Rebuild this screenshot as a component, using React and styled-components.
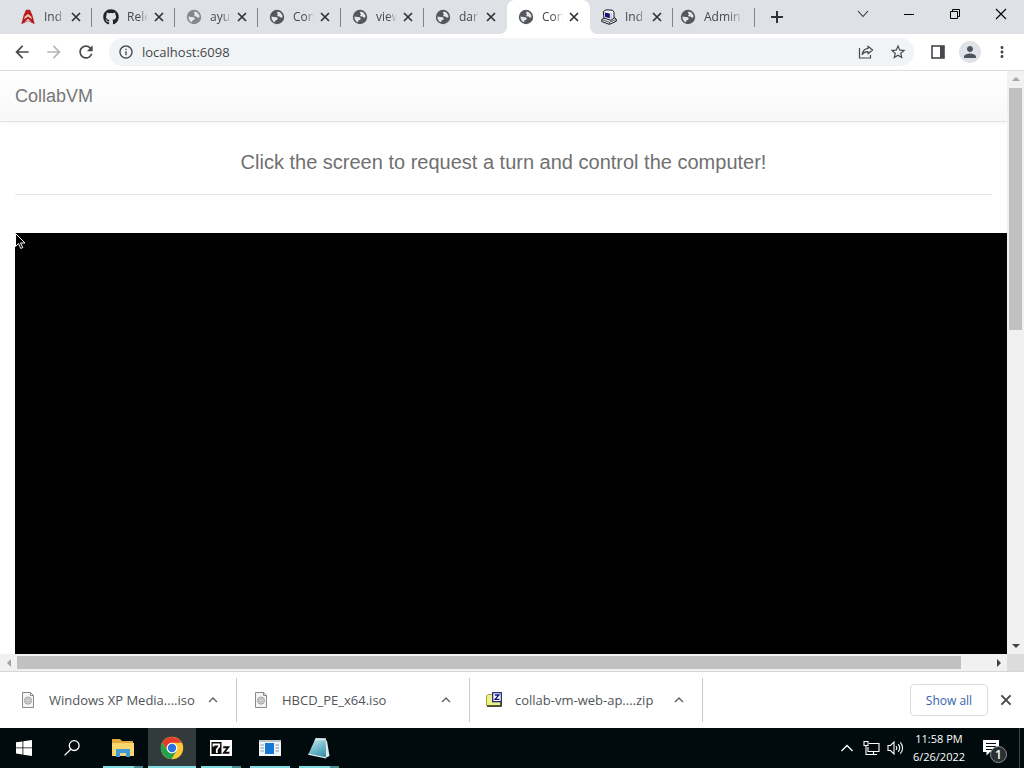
import React from "react";
import styled, { createGlobalStyle, css } from "styled-components";
import {
  MdArrowBack,
  MdArrowForward,
  MdRefresh,
  MdInfoOutline,
  MdStarBorder,
  MdMoreVert,
  MdPerson,
  MdKeyboardArrowUp,
} from "react-icons/md";
import { FaGithub } from "react-icons/fa";

const Global = createGlobalStyle`
  *, *::before, *::after { box-sizing: border-box; }
  body { margin: 0; font-family: "Open Sans", "Noto Sans", sans-serif; }
  button { border: 0; padding: 0; margin: 0; background: none; font: inherit; color: inherit; }
  svg { display: block; flex: none; }
`;

const Desktop = styled.div`
  display: flex;
  flex-direction: column;
  height: 100vh;
  overflow: hidden;
  background: #fff;
`;

/* ---------- tab strip ---------- */

const TabStrip = styled.header`
  display: flex;
  flex: none;
  height: 34px;
  padding-left: 9px;
  background: #dee1e6;
`;

const Tab = styled.div`
  position: relative;
  display: flex;
  align-items: center;
  flex: none;
  width: ${(p) => (p.$closable ? 83 : 82)}px;
  padding-left: ${(p) => (p.$closable ? 11 : 7)}px;
  color: #45494d;
  ${(p) =>
    p.$divided &&
    css`
      &::after {
        content: "";
        position: absolute;
        right: 0;
        top: 8px;
        width: 1px;
        height: 19px;
        background: #808387;
      }
    `}
  ${(p) =>
    p.$active &&
    css`
      background: #fff;
      border-radius: 8px 8px 0 0;
      &::before,
      &::after {
        content: "";
        position: absolute;
        bottom: 0;
        width: 8px;
        height: 8px;
      }
      &::before {
        right: 100%;
        background: radial-gradient(circle at 0 0, transparent 8px, #fff 8px);
      }
      &::after {
        left: 100%;
        background: radial-gradient(circle at 100% 0, transparent 8px, #fff 8px);
      }
    `}
`;

const TabTitle = styled.a`
  flex: none;
  width: ${(p) => (p.$wide ? 42 : 22)}px;
  margin-left: 8px;
  overflow: hidden;
  white-space: nowrap;
  font-size: 12px;
  line-height: 18px;
  color: inherit;
  text-decoration: none;
  mask-image: linear-gradient(to right, #000 55%, transparent 95%);
`;

const TabClose = styled.button`
  display: flex;
  margin-left: 3px;
  color: #303336;
`;

const NewTab = styled.button`
  display: flex;
  align-items: center;
  margin-left: 13px;
  color: #303336;
`;

const WindowButtons = styled.div`
  display: flex;
  margin-left: auto;
`;

const WindowButton = styled.button`
  display: flex;
  align-items: center;
  justify-content: center;
  width: 46px;
  height: 28px;
`;

/* ---------- toolbar ---------- */

const Toolbar = styled.nav`
  display: flex;
  align-items: center;
  flex: none;
  height: 37px;
  padding: 0 6px;
  border-bottom: 1px solid #dadce0;
  color: #45494d;
`;

const ToolButton = styled.button`
  display: flex;
  align-items: center;
  justify-content: center;
  width: 32px;
  height: 28px;
  color: ${(p) => (p.$dim ? "#b4b7ba" : "inherit")};
`;

const NavButtons = styled.div`
  display: flex;
  margin-right: 7px;
`;

const AddressBar = styled.form`
  display: flex;
  align-items: center;
  flex: 1;
  height: 28px;
  margin-right: 8px;
  padding-left: 9px;
  border-radius: 14px;
  background: #f1f3f4;
`;

const AddressInput = styled.input`
  flex: 1;
  min-width: 0;
  margin-left: 8px;
  padding: 0;
  border: 0;
  outline: 0;
  background: none;
  font-family: inherit;
  font-size: 13px;
  line-height: 20px;
  color: #45484b;
`;

const Avatar = styled.span`
  display: flex;
  align-items: center;
  justify-content: center;
  width: 22px;
  height: 22px;
  border-radius: 50%;
  background: #dfe2e7;
  color: #4a545f;
`;

/* ---------- page viewport ---------- */

const Viewport = styled.div`
  display: grid;
  flex: 1;
  min-height: 0;
  grid-template: minmax(0, 1fr) 17px / minmax(0, 1fr) 17px;
`;

const Page = styled.main`
  display: flex;
  flex-direction: column;
  overflow: hidden;
  background: #fff;
  font-family: "Liberation Sans", Arial, sans-serif;
  color: #777;
`;

const Navbar = styled.div`
  flex: none;
  padding: 15px;
  border-bottom: 1px solid #e3e3e3;
  background: linear-gradient(#fff, #f8f8f8);
  box-shadow: 0 1px 4px rgba(0, 0, 0, 0.05);
`;

const Brand = styled.a`
  display: block;
  font-size: 18px;
  line-height: 20px;
  color: #777;
  text-decoration: none;
`;

const Container = styled.div`
  display: flex;
  flex-direction: column;
  flex: 1;
  padding: 24px 0 0 15px;
`;

const Notice = styled.h1`
  margin: 0 15px 38px 0;
  padding: 4px 0 20px;
  border-bottom: 1px solid #e5e5e5;
  font-size: 20px;
  font-weight: 400;
  line-height: 24px;
  text-align: center;
  color: #707070;
`;

const Screen = styled.div`
  position: relative;
  flex: 1;
  background: #000;
`;

const Pointer = styled.svg`
  position: absolute;
  left: 0;
  top: 0;
`;

const Scrollbar = styled.div`
  display: flex;
  flex-direction: ${(p) => (p.$vertical ? "column" : "row")};
  background: #f1f1f1;
`;

const ScrollArrow = styled.button`
  display: flex;
  align-items: center;
  justify-content: center;
  flex: none;
  width: 17px;
  height: 17px;
  color: ${(p) => (p.$dim ? "#a3a3a3" : "#404040")};
`;

const ScrollTrack = styled.div`
  flex: 1;
  padding: ${(p) => (p.$vertical ? "0 2px" : "2px 0")};
`;

const VerticalThumb = styled.div`
  height: 44%;
  background: #c1c1c1;
`;

const HorizontalThumb = styled.div`
  width: 97%;
  height: 13px;
  background: #c1c1c1;
`;

const ScrollCorner = styled.div`
  background: #dcdcdc;
`;

/* ---------- downloads ---------- */

const DownloadShelf = styled.section`
  display: flex;
  align-items: center;
  flex: none;
  height: 57px;
  padding: 0 10px 0 4px;
  border-top: 1px solid #d4d6d9;
  background: #fff;
  color: #45494d;
`;

const Download = styled.div`
  display: flex;
  align-items: center;
  width: 233px;
  height: 44px;
  padding: 0 14px 0 16px;
  border-right: 1px solid #c8cacd;
`;

const DownloadName = styled.a`
  flex: 1;
  margin-left: 13px;
  font-size: 13px;
  line-height: 18px;
  white-space: nowrap;
  color: #505458;
  text-decoration: none;
`;

const DownloadMenu = styled.button`
  display: flex;
  color: #5f6368;
`;

const ShowAll = styled.button`
  width: 78px;
  height: 32px;
  margin-left: auto;
  border: 1px solid #dadce0;
  border-radius: 4px;
  font-size: 12px;
  font-weight: 500;
  color: #3562ae;
`;

const ShelfClose = styled.button`
  display: flex;
  margin-left: 10px;
  color: #45494d;
`;

/* ---------- taskbar ---------- */

const Taskbar = styled.footer`
  display: flex;
  flex: none;
  height: 40px;
  background: #010b0d;
  color: #fff;
`;

const TaskButton = styled.button`
  display: flex;
  align-items: center;
  justify-content: center;
  width: 48px;
  height: 40px;
`;

const RunningApps = styled.div`
  display: flex;
  gap: 1px;
  margin-left: 3px;
`;

const AppButton = styled(TaskButton)`
  position: relative;
  background: ${(p) => (p.$current ? "#323a3c" : "transparent")};
  &::after {
    content: "";
    position: absolute;
    bottom: 0;
    left: ${(p) => (p.$current ? 0 : 4)}px;
    right: ${(p) => (p.$current ? 0 : 4)}px;
    height: 2px;
    background: ${(p) =>
      p.$stacked ? "linear-gradient(to right, #7fdde2 31px, #4b8d91 31px)" : "#7fdde2"};
  }
`;

const Tray = styled.div`
  display: flex;
  align-items: center;
  margin-left: auto;
  padding-right: 4px;
`;

const TrayButton = styled.button`
  display: flex;
  align-items: center;
  justify-content: center;
  width: 24px;
  height: 40px;
`;

const Clock = styled.time`
  width: 64px;
  font-size: 11px;
  line-height: 18px;
  text-align: center;
  white-space: nowrap;
`;

const ActionCenter = styled.button`
  position: relative;
  display: flex;
  align-items: center;
  justify-content: center;
  width: 40px;
  height: 40px;
  margin-right: 8px;
`;

const Count = styled.span`
  position: absolute;
  right: 4px;
  bottom: 5px;
  width: 17px;
  height: 17px;
  border: 1px solid #8b9091;
  border-radius: 50%;
  background: #2a3032;
  font-size: 12px;
  font-weight: 600;
  line-height: 15px;
  text-align: center;
`;

const DesktopPeek = styled.span`
  width: 1px;
  height: 40px;
  background: #3b4547;
`;

/* ---------- drawings ---------- */

const Cross = ({ size = 14 }) => (
  <svg width={size} height={size} viewBox="0 0 14 14" stroke="currentColor" strokeWidth="1.7">
    <path d="m3 3 8 8M11 3l-8 8" />
  </svg>
);

const Plus = () => (
  <svg width="18" height="18" viewBox="0 0 18 18" stroke="currentColor" strokeWidth="2">
    <path d="M9 3v12M3 9h12" />
  </svg>
);

const Globe = ({ color = "#54585c" }) => (
  <svg width="16" height="16" viewBox="0 0 16 16">
    <circle cx="8" cy="8" r="7.2" fill={color} />
    <path d="M8.6 2.4 11 3.200 13.200 6l.4 2.200-1.800.6-1.200-1.200H9L8 6.400l1-1.200-1-.9Z" fill="#e4e6e9" />
    <path d="M2.400 7.600 5.200 8l2.600.2 1 1.400-.6 1.200-1.800.6-.4 1.900-1.600-.8-1.600-2.200Z" fill="#e4e6e9" />
  </svg>
);

const ApacheA = () => (
  <svg width="16" height="16" viewBox="0 0 16 16">
    <path d="M6 .8h4L12.300 6l2.400 9.200-3-1.400L8 12l-3.400 1.800-3.300 1.400L3.700 6Z" fill="#b51c22" />
    <path d="M4.800 7.600 8 5l3.200 2.600.7 2.600L8 7.400l-3.900 2.800Z" fill="#f6c9a4" />
    <path d="M4.400 13.400 8 9.800l3.600 3.600L8 11.600Z" fill="#e8e1e2" />
  </svg>
);

const MachineIcon = () => (
  <svg width="16" height="16" viewBox="0 0 16 16">
    <path d="M.8 10.600 4 8.500l9-.5 2.300 2.200v2L8.500 15.400.8 12.600Z" fill="#e3e5ea" stroke="#181a24" />
    <path d="M1 10.800 8.500 13.300l6.600-3M8.500 13.300v2" fill="none" stroke="#3c3f4c" strokeWidth=".8" />
    <path d="M2.300 2.600 5 .8l6.500.4L13 3.200v6L10 11.300 3 9.200Z" fill="#f4f5f7" stroke="#181a24" />
    <path d="M3.700 3.500 8.800 4.600v4.600L4.200 8Z" fill="#17157d" />
    <path d="M10.200 4.300v6.800" stroke="#9094a0" strokeWidth=".8" />
  </svg>
);

const ShareIcon = () => (
  <svg width="16" height="16" viewBox="0 0 16 16" fill="none" stroke="currentColor" strokeWidth="1.2">
    <path d="M1.500 4v10h11v-3" />
    <path d="M10 2.200 14.600 6 10 9.800V7.600C7.400 7.500 5.700 8.300 4.200 10.400 4.600 6.900 6.700 4.800 10 4.400Z" strokeLinejoin="round" />
  </svg>
);

const SidePanelIcon = () => (
  <svg width="14" height="14" viewBox="0 0 14 14">
    <rect x="1" y="1" width="12" height="12" fill="none" stroke="currentColor" strokeWidth="1.6" />
    <rect x="9" y="1" width="4" height="12" fill="currentColor" />
  </svg>
);

const arrowPaths = {
  up: "M0 5 4 1l4 4Z",
  down: "M0 2l4 4 4-4Z",
  left: "M6 0 2 4l4 4Z",
  right: "M2 0l4 4-4 4Z",
};

const Arrow = ({ dir }) => (
  <svg width="8" height="8" viewBox="0 0 8 8">
    <path d={arrowPaths[dir]} fill="currentColor" />
  </svg>
);

const DiscFile = () => (
  <svg width="16" height="16" viewBox="0 0 16 16">
    <path d="M2.500.5h8l3 3v12h-11Z" fill="#f5f5f5" stroke="#8a8a8a" />
    <path d="M10.500.5v3h3" fill="none" stroke="#8a8a8a" />
    <circle cx="8" cy="8.6" r="3.6" fill="#c9c9c9" stroke="#9c9c9c" strokeWidth=".8" />
    <circle cx="8" cy="8.6" r="1.1" fill="#f3f3f3" stroke="#9c9c9c" strokeWidth=".5" />
  </svg>
);

const ZipFile = () => (
  <svg width="16" height="16" viewBox="0 0 16 16">
    <path d="M.5 4 2 2.500h4L7 4h7.500v9.500H.5Z" fill="#eef08a" stroke="#a3a535" />
    <path d="M1 14.200h14.200V10" fill="none" stroke="#111" strokeWidth="1.2" />
    <rect x="6.7" y=".7" width="8.6" height="9" fill="#fff" stroke="#16167c" strokeWidth="1.2" />
    <path d="M8.800 3h4.200L9 7.400h4.400" fill="none" stroke="#16167c" strokeWidth="1.3" />
  </svg>
);

const WindowsLogo = () => (
  <svg width="16" height="16" viewBox="0 0 16 16" fill="#fff">
    <path d="M0 2.300 6.500 1.400v6.100H0ZM7.300 1.300 16 0v7.500H7.300ZM0 8.300h6.500v6.200L0 13.600ZM7.300 8.300H16V16l-8.700-1.300Z" />
  </svg>
);

const SearchIcon = () => (
  <svg width="16" height="16" viewBox="0 0 16 16" fill="none" stroke="#fff" strokeWidth="1.3">
    <circle cx="10.2" cy="5.6" r="4.9" />
    <path d="M6.800 9.200.6 15.400" />
  </svg>
);

const FolderIcon = () => (
  <svg width="22" height="20" viewBox="0 0 22 20">
    <path d="M0 1h8l2 2h11v15H0Z" fill="#e3aa3b" />
    <path d="M0 5h22v13H0Z" fill="#fbd66d" />
    <path d="M4 11h14v8h-4v-4H8v4H4Z" fill="#3f9bd3" />
    <path d="M8 15h6v3H8Z" fill="#f4d57c" />
  </svg>
);

const ChromeIcon = () => (
  <svg width="24" height="24" viewBox="0 0 24 24">
    <circle cx="12" cy="12" r="11.2" fill="#fcc934" />
    <path d="M2.300 6.400A11.200 11.200 0 0 1 21.700 6.700H12A5.300 5.300 0 0 0 6.900 13.400Z" fill="#e33b2e" />
    <path d="M2.300 6.400 7.300 14.600A5.300 5.300 0 0 0 12 17.300l4.600-2.600-5.200 8.500A11.200 11.200 0 0 1 2.300 6.400Z" fill="#23a150" />
    <circle cx="12" cy="12" r="5.3" fill="#fff" />
    <circle cx="12" cy="12" r="4.2" fill="#2b72e3" />
  </svg>
);

const SevenZip = () => (
  <svg width="22" height="16" viewBox="0 0 22 16">
    <rect width="22" height="16" fill="#fff" />
    <rect x="1.5" y="2" width="10" height="12" fill="#0a0a0a" />
    <path d="M3.500 6.500V4.500h5.700v2L6.800 9.500v3.500" fill="none" stroke="#fff" strokeWidth="1.8" />
    <path d="M13.200 7.200h5L14 12.800h5.400" fill="none" stroke="#0a0a0a" strokeWidth="1.9" />
  </svg>
);

const PanelApp = () => (
  <svg width="22" height="16" viewBox="0 0 22 16">
    <rect width="22" height="16" fill="#f2f5f7" />
    <rect width="22" height="2" fill="#b9c4ca" />
    <rect x="6" y="3" width="9" height="11" fill="#1678d4" />
    <path d="M1.500 5H5M1.500 8H5M1.500 11H5M16.500 5H20M16.500 8H20M16.500 11H20" stroke="#7f98a5" />
  </svg>
);

const NotepadApp = () => (
  <svg width="24" height="22" viewBox="0 0 24 22">
    <defs>
      <linearGradient id="pad" x1="0.2" y1="0" x2="0.7" y2="1">
        <stop offset="0" stopColor="#c3e6ee" />
        <stop offset="0.6" stopColor="#67b4c6" />
        <stop offset="1" stopColor="#3b93aa" />
      </linearGradient>
    </defs>
    <path d="M18 2.500 20 4l2.500 15-4 2Z" fill="#dfe8ea" />
    <path d="M8 2.500 18.500 2l.5 18.500L1.500 17Z" fill="url(#pad)" />
    <path d="m8.500 1 10.500.3v2L7.800 3.200Z" fill="#dbe5e8" />
    <path d="m1.500 16.500 17.500 3.700v1.200L1 17.700Z" fill="#e3eef0" />
  </svg>
);

const NetworkIcon = () => (
  <svg width="17" height="16" viewBox="0 0 17 16" fill="none" stroke="#fff" strokeWidth="1.1">
    <path d="M6 3.500h10v8H5V7M10.500 11.500v3M7 14.500h7" />
    <path d="M1 1.500h4v4H1ZM3 5.500v9h4" />
  </svg>
);

const SpeakerIcon = () => (
  <svg width="17" height="16" viewBox="0 0 17 16" fill="none" stroke="#fff" strokeWidth="1.1">
    <path d="M1 5.500h2.500L7 2v12l-3.500-3.500H1Z" />
    <path d="M9 6q1.600 2 0 4M11.200 4.200q3 3.800 0 7.600M13.400 2.400q4.400 5.600 0 11.200" />
  </svg>
);

const NoteIcon = () => (
  <svg width="16" height="16" viewBox="0 0 16 16">
    <path d="M0 0h16v12H7l-3.500 3.500V12H0Z" fill="#fff" />
    <path d="M3 3.500h10M3 6.500h10M3 9.500h7" stroke="#010b0d" strokeWidth="1.2" />
  </svg>
);

const tabs = [
  { title: "Ind", icon: <ApacheA />, divided: true },
  { title: "Rele", icon: <FaGithub size={16} color="#202327" />, divided: true },
  { title: "ayu", icon: <Globe color="#83868a" />, divided: true },
  { title: "Con", icon: <Globe />, divided: true },
  { title: "view", icon: <Globe />, divided: true },
  { title: "dar", icon: <Globe /> },
  { title: "Con", icon: <Globe />, active: true },
  { title: "Ind", icon: <MachineIcon />, divided: true },
];

const downloads = [
  { name: "Windows XP Media....iso", icon: <DiscFile /> },
  { name: "HBCD_PE_x64.iso", icon: <DiscFile /> },
  { name: "collab-vm-web-ap....zip", icon: <ZipFile /> },
];

export default function App() {
  return (
    <Desktop>
      <Global />
      <TabStrip>
        {tabs.map((tab, i) => (
          <Tab key={i} $closable $active={tab.active} $divided={tab.divided}>
            {tab.icon}
            <TabTitle href="#">{tab.title}</TabTitle>
            <TabClose aria-label="Close tab">
              <Cross />
            </TabClose>
          </Tab>
        ))}
        <Tab $divided>
          <Globe />
          <TabTitle href="#" $wide>
            Admin P
          </TabTitle>
        </Tab>
        <NewTab aria-label="New tab">
          <Plus />
        </NewTab>
        <WindowButtons>
          <WindowButton aria-label="Search tabs">
            <svg width="12" height="12" viewBox="0 0 12 12" fill="none" stroke="#303336" strokeWidth="1.1">
              <path d="m1 3 5 5.500L11 3" />
            </svg>
          </WindowButton>
          <WindowButton aria-label="Minimize">
            <svg width="10" height="10" viewBox="0 0 10 10">
              <path d="M0 5.500h10" stroke="#000" />
            </svg>
          </WindowButton>
          <WindowButton aria-label="Restore">
            <svg width="10" height="10" viewBox="0 0 10 10" fill="none" stroke="#000">
              <path d="M.5 2.500h7v7h-7ZM2.500 2.500v-2h7v7h-2" />
            </svg>
          </WindowButton>
          <WindowButton aria-label="Close">
            <svg width="12" height="12" viewBox="0 0 12 12" stroke="#000" strokeWidth="1.1">
              <path d="m1 1 10 10M11 1 1 11" />
            </svg>
          </WindowButton>
        </WindowButtons>
      </TabStrip>

      <Toolbar>
        <NavButtons>
          <ToolButton aria-label="Back">
            <MdArrowBack size={20} />
          </ToolButton>
          <ToolButton aria-label="Forward" $dim>
            <MdArrowForward size={20} />
          </ToolButton>
          <ToolButton aria-label="Reload">
            <MdRefresh size={20} />
          </ToolButton>
        </NavButtons>
        <AddressBar onSubmit={(e) => e.preventDefault()}>
          <MdInfoOutline size={16} />
          <AddressInput aria-label="Address" defaultValue="localhost:6098" />
          <ToolButton type="button" aria-label="Share">
            <ShareIcon />
          </ToolButton>
          <ToolButton type="button" aria-label="Bookmark">
            <MdStarBorder size={18} />
          </ToolButton>
        </AddressBar>
        <ToolButton aria-label="Side panel">
          <SidePanelIcon />
        </ToolButton>
        <ToolButton aria-label="Profile">
          <Avatar>
            <MdPerson size={18} />
          </Avatar>
        </ToolButton>
        <ToolButton aria-label="Menu">
          <MdMoreVert size={18} />
        </ToolButton>
      </Toolbar>

      <Viewport>
        <Page>
          <Navbar>
            <Brand href="#">CollabVM</Brand>
          </Navbar>
          <Container>
            <Notice>Click the screen to request a turn and control the computer!</Notice>
            <Screen>
              <Pointer width="12" height="18" viewBox="0 0 12 18">
                <path d="M.5.500v13l3-3 2.300 5 2-1-2.300-4.500h4.500Z" fill="#000" stroke="#fff" />
              </Pointer>
            </Screen>
          </Container>
        </Page>
        <Scrollbar $vertical>
          <ScrollArrow aria-label="Scroll up" $dim>
            <Arrow dir="up" />
          </ScrollArrow>
          <ScrollTrack $vertical>
            <VerticalThumb />
          </ScrollTrack>
          <ScrollArrow aria-label="Scroll down">
            <Arrow dir="down" />
          </ScrollArrow>
        </Scrollbar>
        <Scrollbar>
          <ScrollArrow aria-label="Scroll left" $dim>
            <Arrow dir="left" />
          </ScrollArrow>
          <ScrollTrack>
            <HorizontalThumb />
          </ScrollTrack>
          <ScrollArrow aria-label="Scroll right">
            <Arrow dir="right" />
          </ScrollArrow>
        </Scrollbar>
        <ScrollCorner />
      </Viewport>

      <DownloadShelf>
        {downloads.map((d) => (
          <Download key={d.name}>
            {d.icon}
            <DownloadName href="#">{d.name}</DownloadName>
            <DownloadMenu aria-label="Download options">
              <MdKeyboardArrowUp size={18} />
            </DownloadMenu>
          </Download>
        ))}
        <ShowAll>Show all</ShowAll>
        <ShelfClose aria-label="Close downloads">
          <Cross size={16} />
        </ShelfClose>
      </DownloadShelf>

      <Taskbar>
        <TaskButton aria-label="Start">
          <WindowsLogo />
        </TaskButton>
        <TaskButton aria-label="Search">
          <SearchIcon />
        </TaskButton>
        <RunningApps>
          <AppButton aria-label="File Explorer" $stacked>
            <FolderIcon />
          </AppButton>
          <AppButton aria-label="Chrome" $current>
            <ChromeIcon />
          </AppButton>
          <AppButton aria-label="7-Zip" $stacked>
            <SevenZip />
          </AppButton>
          <AppButton aria-label="Application">
            <PanelApp />
          </AppButton>
          <AppButton aria-label="Notepad" $stacked>
            <NotepadApp />
          </AppButton>
        </RunningApps>
        <Tray>
          <TrayButton aria-label="Hidden icons">
            <svg width="14" height="10" viewBox="0 0 14 10" fill="none" stroke="#fff" strokeWidth="1.3">
              <path d="m1.500 8 5.500-5.500L12.500 8" />
            </svg>
          </TrayButton>
          <TrayButton aria-label="Network">
            <NetworkIcon />
          </TrayButton>
          <TrayButton aria-label="Volume">
            <SpeakerIcon />
          </TrayButton>
          <Clock>
            11:58 PM
            <br />
            6/26/2022
          </Clock>
          <ActionCenter aria-label="Notifications">
            <NoteIcon />
            <Count>1</Count>
          </ActionCenter>
          <DesktopPeek />
        </Tray>
      </Taskbar>
    </Desktop>
  );
}
